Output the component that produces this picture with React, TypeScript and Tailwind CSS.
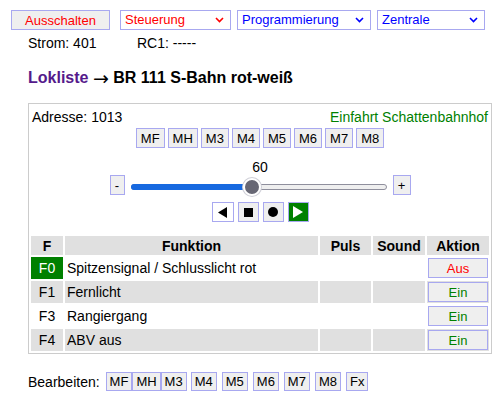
import React from "react";

const btn = "border border-[#a8a8f0] bg-[#efefef] text-[13px] leading-none flex items-center justify-center text-black";

function Chevron({ color }: { color: string }) {
  return (
    <svg width="9" height="6" viewBox="0 0 9 6" className="ml-auto">
      <polyline points="1,1 4.5,4.5 8,1" fill="none" stroke={color} strokeWidth="1.6" />
    </svg>
  );
}

function Select({ label, color, w }: { label: string; color: string; w: string }) {
  return (
    <div className={`${w} h-[20px] border border-[#a8a8f0] bg-white flex items-center pl-[4px] pr-[6px] text-[13px]`} style={{ color }}>
      <span>{label}</span>
      <Chevron color={color} />
    </div>
  );
}

const rows = [
  { f: "F0", name: "Spitzensignal / Schlusslicht rot", on: true, gray: false },
  { f: "F1", name: "Fernlicht", on: false, gray: true },
  { f: "F3", name: "Rangiergang", on: false, gray: false },
  { f: "F4", name: "ABV aus", on: false, gray: true },
];

export default function App() {
  const pct = (60 / 126) * 100;
  return (
    <div className="w-[504px] h-[404px] bg-white text-black text-[14px] leading-[16px]" style={{ fontFamily: '"Liberation Sans", Arial, sans-serif' }}>
      <div className="pt-[10px] pl-[11px] flex">
        <div className={`${btn} w-[99px] h-[20px] !text-[#ff0000]`}>Ausschalten</div>
        <div className="ml-[10px]"><Select label="Steuerung" color="#ff0000" w="w-[111px]" /></div>
        <div className="ml-[6px]"><Select label="Programmierung" color="#0000ff" w="w-[134px]" /></div>
        <div className="ml-[6px]"><Select label="Zentrale" color="#0000ff" w="w-[108px]" /></div>
      </div>
      <div className="mt-[5px] flex pl-[28px] h-[16px]">
        <span className="w-[109px]">Strom: 401</span>
        <span>RC1: -----</span>
      </div>
      <div className="mt-[18px] pl-[28px] h-[18px] leading-[18px] text-[16px] font-bold flex items-center whitespace-pre">
        <span className="text-[#551a8b]">Lokliste</span>
        <span> </span>
        <span className="text-[19px] font-normal leading-[18px]" style={{ fontFamily: '"DejaVu Sans", sans-serif' }}>→</span>
        <span> BR 111 S-Bahn rot-weiß</span>
      </div>
      <div className="mt-[16px] ml-[28px] w-[464px] border border-[#cccccc]">
        <div className="flex justify-between pt-[5px] px-[3px] h-[21px]">
          <span>Adresse: 1013</span>
          <span className="text-[#008000]">Einfahrt Schattenbahnhof</span>
        </div>
        <div className="mt-[3px] flex justify-center gap-[3px]">
          {["MF", "MH", "M3", "M4", "M5", "M6", "M7", "M8"].map((m) => (
            <div key={m} className={`${btn} h-[20px] px-[4px]`}>{m}</div>
          ))}
        </div>
        <div className="mt-[11px] text-center h-[16px]">60</div>
        <div className="flex justify-center items-center h-[20px]">
          <div className={`${btn} w-[15px] h-[20px]`}>-</div>
          <div className="relative mx-[6px] w-[256px] h-[6px] mt-[3px] rounded-full bg-[#efefef] border border-[#8f8f9d]">
            <div className="absolute left-[-1px] top-[-1px] h-[6px] rounded-full bg-[#1769e0]" style={{ width: `${pct}%` }} />
            <div className="absolute top-[-7px] w-[18px] h-[18px] rounded-full bg-[#676774] border-2 border-white shadow-[0_0_0_1px_#d0d0d8]" style={{ left: `calc(${pct}% - 9px)` }} />
          </div>
          <div className={`${btn} w-[18px] h-[20px]`}>+</div>
        </div>
        <div className="mt-[7px] flex justify-center gap-[4px]">
          <div className="w-[22px] h-[20px] border border-[#a8a8f0] bg-white flex items-center justify-center">
            <svg width="9" height="11" viewBox="0 0 9 11"><polygon points="9,0 9,11 0,5.5" fill="#000" /></svg>
          </div>
          <div className="w-[21px] h-[20px] border border-[#a8a8f0] bg-[#efefef] flex items-center justify-center">
            <div className="w-[9px] h-[9px] bg-black" />
          </div>
          <div className="w-[21px] h-[20px] border border-[#a8a8f0] bg-[#efefef] flex items-center justify-center">
            <div className="w-[10px] h-[10px] rounded-full bg-black" />
          </div>
          <div className="w-[21px] h-[20px] border border-[#a8a8f0] bg-[#008000] flex items-center justify-center">
            <svg width="10" height="12" viewBox="0 0 10 12"><polygon points="0,0 10,6 0,12" fill="#fff" /></svg>
          </div>
        </div>
        <table className="mt-[12px] w-full table-fixed border-separate border-spacing-[2px]">
          <colgroup>
            <col className="w-[32px]" />
            <col />
            <col className="w-[51px]" />
            <col className="w-[52px]" />
            <col className="w-[62px]" />
          </colgroup>
          <thead>
            <tr className="h-[19px] font-bold">
              <th className="bg-[#e0e0e0] p-0 font-bold">F</th>
              <th className="bg-[#e0e0e0] p-0 font-bold">Funktion</th>
              <th className="bg-[#e0e0e0] p-0 font-bold">Puls</th>
              <th className="bg-[#e0e0e0] p-0 font-bold">Sound</th>
              <th className="bg-[#e0e0e0] p-0 font-bold">Aktion</th>
            </tr>
          </thead>
          <tbody>
            {rows.map((r) => {
              const bg = r.gray ? "bg-[#e0e0e0]" : "bg-white";
              return (
                <tr key={r.f} className="h-[22px]">
                  <td className={`p-0 text-center ${r.on ? "bg-[#008000] text-white" : bg}`}>{r.f}</td>
                  <td className={`p-0 pl-[2px] ${bg}`}>{r.name}</td>
                  <td className={`p-0 ${bg}`}></td>
                  <td className={`p-0 ${bg}`}></td>
                  <td className={`p-0 ${bg}`}>
                    <div className={`${btn} mx-auto w-[60px] h-[20px] ${r.on ? "!text-[#ff0000]" : "!text-[#008000]"}`}>
                      {r.on ? "Aus" : "Ein"}
                    </div>
                  </td>
                </tr>
              );
            })}
          </tbody>
        </table>
      </div>
      <div className="mt-[18px] pl-[28px] flex items-center">
        <span className="mr-[6px]">Bearbeiten:</span>
        <div className="flex">
          {["MF", "MH", "M3"].map((m) => (
            <div key={m} className={`${btn} h-[19px] px-[3px]`}>{m}</div>
          ))}
        </div>
        <div className="flex gap-[5px] ml-[4px]">
          {["M4", "M5", "M6", "M7", "M8", "Fx"].map((m) => (
            <div key={m} className={`${btn} h-[19px] px-[3px]`}>{m}</div>
          ))}
        </div>
      </div>
    </div>
  );
}
